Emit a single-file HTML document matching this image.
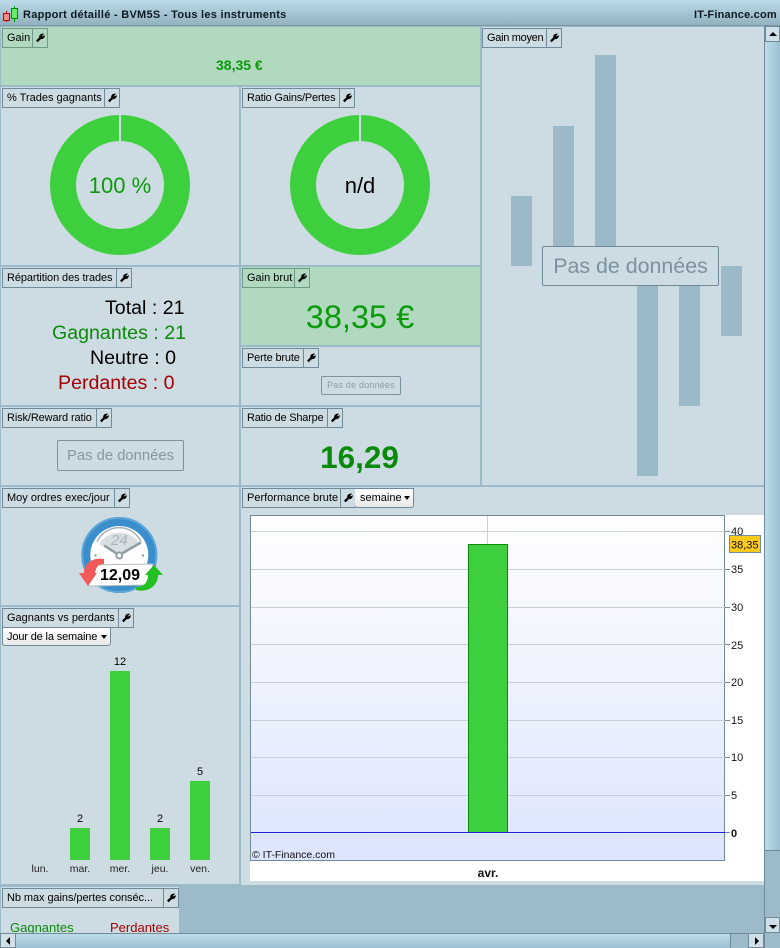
<!DOCTYPE html>
<html><head><meta charset="utf-8"><style>
html,body{margin:0;padding:0}
body{width:780px;height:948px;position:relative;overflow:hidden;background:#9cbac8;font-family:"Liberation Sans",sans-serif;color:#000}
.a,.p,.h,.t{position:absolute}
.p{background:#cddbe2}
.g{background:#b0d9c0}
.h{height:18px;border:1px solid #6f8a98;font-size:11px;line-height:19px;white-space:nowrap;box-sizing:content-box;padding-left:4px}
.h i{position:absolute;right:0;top:0;width:14px;height:18px;border-left:1px solid #6f8a98}
.h svg{position:absolute;left:2px;top:4px}
.t{white-space:nowrap;line-height:1}
.dd{position:absolute;height:17px;background:linear-gradient(#fff,#e8e8e8);border:1px solid #6f8a98;border-radius:0 0 3px 3px;font-size:11px;line-height:18px;padding-left:4px;box-sizing:content-box;white-space:nowrap}
.dd b{position:absolute;right:3px;top:7px;border:3.5px solid transparent;border-top:4px solid #000;border-bottom:0}
.bar{position:absolute;background:#3ecf3e}
.gb{position:absolute;background:#9cb9c7}
.sb{position:absolute;background:linear-gradient(90deg,#bcdcea,#9cc0d0)}
.sbh{position:absolute;background:linear-gradient(#bcdcea,#9cc0d0)}
.btn{position:absolute;background:#cfe0e8;border:1px solid #6f8a98;box-sizing:border-box}
</style></head><body>
<svg width="0" height="0" style="position:absolute"><defs><symbol id="w" viewBox="0 0 11 11"><path d="M2 9.300 L6.300 5" stroke="#000" stroke-width="2.600" fill="none"/><path d="M4.600 4.500 C4.400 1.800 7 .2 10 .8 L7.900 2.900 L8.500 3.900 L10.700 2.200 C11.200 5.200 8.300 7.600 6 6.400 Z" fill="#000"/></symbol></defs></svg>

<div class="a" style="left:0;top:0;width:780px;height:26px;background:linear-gradient(#bcdae8,#93b2c0);border-bottom:1px solid #7b97a3;box-sizing:border-box"></div>
<svg class="a" style="left:2px;top:5px" width="18" height="18"><path d="M4.500 6v11" stroke="#c00"/><rect x="1.500" y="8.500" width="6" height="7" fill="#f88" stroke="#b00"/><path d="M12.500 1v16" stroke="#090"/><rect x="9.500" y="3.500" width="6" height="10" fill="#6e6" stroke="#080"/></svg>
<div class="t" style="left:23px;top:10px;font-size:11px;font-weight:bold;color:#0c1a22;letter-spacing:.28px">Rapport détaillé - BVM5S - Tous les instruments</div>
<div class="t" style="left:694px;top:10px;font-size:11px;font-weight:bold;color:#0c1a22;letter-spacing:.2px">IT-Finance.com</div>

<!-- panels -->
<div class="p g" style="left:1px;top:27px;width:479px;height:58px"></div>
<div class="p" style="left:1px;top:87px;width:238px;height:178px"></div>
<div class="p" style="left:241px;top:87px;width:239px;height:178px"></div>
<div class="p" style="left:482px;top:27px;width:282px;height:458px"></div>
<div class="p" style="left:1px;top:267px;width:238px;height:138px"></div>
<div class="p g" style="left:241px;top:267px;width:239px;height:78px"></div>
<div class="p" style="left:241px;top:347px;width:239px;height:58px"></div>
<div class="p" style="left:1px;top:407px;width:238px;height:78px"></div>
<div class="p" style="left:241px;top:407px;width:239px;height:78px"></div>
<div class="p" style="left:1px;top:487px;width:238px;height:118px"></div>
<div class="p" style="left:1px;top:607px;width:238px;height:277px"></div>
<div class="p" style="left:241px;top:487px;width:523px;height:398px"></div>
<div class="p" style="left:1px;top:887px;width:178px;height:46px"></div>

<!-- headers -->
<div class="h" style="left:2px;top:28px;width:40px;border-color:#6f9a88">Gain<i style="border-color:#6f9a88"><svg width="10" height="10"><use href="#w"/></svg></i></div>
<div class="h" style="left:2px;top:88px;width:112px">% Trades gagnants<i><svg width="10" height="10"><use href="#w"/></svg></i></div>
<div class="h" style="left:242px;top:88px;width:107px;letter-spacing:-.22px">Ratio Gains/Pertes<i><svg width="10" height="10"><use href="#w"/></svg></i></div>
<div class="h" style="left:482px;top:28px;width:74px;letter-spacing:-.3px">Gain moyen<i><svg width="10" height="10"><use href="#w"/></svg></i></div>
<div class="h" style="left:2px;top:268px;width:124px;letter-spacing:-.1px">Répartition des trades<i><svg width="10" height="10"><use href="#w"/></svg></i></div>
<div class="h" style="left:242px;top:268px;width:62px;border-color:#6f9a88">Gain brut<i style="border-color:#6f9a88"><svg width="10" height="10"><use href="#w"/></svg></i></div>
<div class="h" style="left:242px;top:348px;width:71px;letter-spacing:-.15px">Perte brute<i><svg width="10" height="10"><use href="#w"/></svg></i></div>
<div class="h" style="left:2px;top:408px;width:104px;letter-spacing:-.12px">Risk/Reward ratio<i><svg width="10" height="10"><use href="#w"/></svg></i></div>
<div class="h" style="left:242px;top:408px;width:95px;letter-spacing:-.2px">Ratio de Sharpe<i><svg width="10" height="10"><use href="#w"/></svg></i></div>
<div class="h" style="left:2px;top:488px;width:122px">Moy ordres exec/jour<i><svg width="10" height="10"><use href="#w"/></svg></i></div>
<div class="h" style="left:2px;top:608px;width:126px">Gagnants vs perdants<i><svg width="10" height="10"><use href="#w"/></svg></i></div>
<div class="h" style="left:242px;top:488px;width:108px">Performance brute<i><svg width="10" height="10"><use href="#w"/></svg></i></div>
<div class="dd" style="left:355px;top:488px;width:53px;height:18px;line-height:19px;border-left:0;padding-left:5px">semaine<b></b></div>
<div class="dd" style="left:2px;top:627px;width:103px;letter-spacing:-.15px">Jour de la semaine<b></b></div>
<div class="h" style="left:2px;top:888px;width:171px;letter-spacing:-.07px">Nb max gains/pertes conséc...<i><svg width="10" height="10"><use href="#w"/></svg></i></div>

<!-- Gain -->
<div class="t" style="left:216px;top:58px;font-size:14px;font-weight:bold;color:#0a9a0a">38,35 €</div>

<!-- donuts -->
<svg class="a" style="left:50px;top:115px" width="140" height="140"><circle cx="70" cy="70" r="57" fill="none" stroke="#3ecf3e" stroke-width="26"/><rect x="69" y="0" width="2" height="26" fill="#cddbe2"/></svg>
<div class="t" style="left:40px;top:175px;width:160px;text-align:center;font-size:22px;color:#0a9a0a">100 %</div>
<svg class="a" style="left:290px;top:115px" width="140" height="140"><circle cx="70" cy="70" r="57" fill="none" stroke="#3ecf3e" stroke-width="26"/><rect x="69" y="0" width="2" height="26" fill="#cddbe2"/></svg>
<div class="t" style="left:280px;top:175px;width:160px;text-align:center;font-size:22px;color:#000">n/d</div>

<!-- Gain moyen bars -->
<div class="gb" style="left:511px;top:196px;width:21px;height:70px"></div>
<div class="gb" style="left:553px;top:126px;width:21px;height:125px"></div>
<div class="gb" style="left:595px;top:55px;width:21px;height:196px"></div>
<div class="gb" style="left:637px;top:280px;width:21px;height:196px"></div>
<div class="gb" style="left:679px;top:280px;width:21px;height:126px"></div>
<div class="gb" style="left:721px;top:266px;width:21px;height:70px"></div>
<div class="a" style="left:542px;top:246px;width:177px;height:40px;box-sizing:border-box;background:#cddbe2;border:1px solid #6f8a98;border-radius:2px;text-align:center;font-size:21.400px;line-height:39px;color:#7d929e">Pas de données</div>

<!-- repartition -->
<div class="t" style="left:105px;top:299px;font-size:19.600px;color:#000">Total : 21</div>
<div class="t" style="left:52px;top:324px;font-size:19.600px;color:#0a8a0a">Gagnantes : 21</div>
<div class="t" style="left:90px;top:349px;font-size:19.600px;color:#000">Neutre : 0</div>
<div class="t" style="left:58px;top:374px;font-size:19.600px;color:#a80000">Perdantes : 0</div>

<!-- gain brut -->
<div class="t" style="left:241px;top:301px;width:238px;text-align:center;font-size:32.500px;color:#0a9a0a">38,35 €</div>

<!-- perte brute -->
<div class="a" style="left:321px;top:376px;width:80px;height:19px;box-sizing:border-box;border:1px solid #7d929e;border-radius:2px;text-align:center;font-size:9px;line-height:17px;color:#8a9eaa;letter-spacing:.2px">Pas de données</div>

<!-- risk -->
<div class="a" style="left:57px;top:440px;width:127px;height:31px;box-sizing:border-box;border:1px solid #7d929e;border-radius:2px;text-align:center;font-size:14.800px;line-height:30px;color:#86989f">Pas de données</div>

<!-- sharpe -->
<div class="t" style="left:241px;top:442px;width:237px;text-align:center;font-size:31.500px;font-weight:bold;color:#0a8a0a">16,29</div>

<!-- clock -->
<svg class="a" style="left:78px;top:515px" width="86" height="82" viewBox="0 0 86 82">
<circle cx="41.300" cy="40" r="38" fill="#3a8ecb"/><circle cx="41.300" cy="40" r="37" fill="none" stroke="#5ba6d8" stroke-width="2"/>
<circle cx="41.300" cy="40" r="29" fill="#fff"/>
<path d="M21 29 A24 24 0 0 1 62 29 L41.300 41 Z" fill="#d8dfe3"/>
<path d="M19 27 A24 24 0 0 1 63 27" fill="none" stroke="#a3b2ba" stroke-width="1.500"/>
<path d="M38.500 38.500 L27 31 M44 38.500 L62 28" stroke="#8e9ea6" stroke-width="2.500" stroke-linecap="round"/>
<circle cx="41.300" cy="40.500" r="3" fill="#fff" stroke="#8e9ea6" stroke-width="2"/>
<circle cx="17.500" cy="40.500" r="1.200" fill="#8e9ea6"/><circle cx="65" cy="40.500" r="1.200" fill="#8e9ea6"/>
<path d="M13 50 L75 49 L71 70 L10 71 Z" fill="#fff" stroke="#b0bcc2"/>
<path d="M10 71 L1 58 L6 58 C6 48 15 42 26 44 L26 49 C20 49 18 52 17 58 L19 58 Z" fill="#f25a5a"/>
<path d="M76 50 L85 60 L80 60 C80 71 70 78 58 75 L58 72 C66 72 70 67 70 60 L67 60 Z" fill="#22c022"/>
</svg>
<div class="t" style="left:100px;top:568px;font-size:16px;font-weight:bold">12,09</div>
<div class="t" style="left:111px;top:533px;font-size:15px;font-style:italic;color:#a7b4ba">24</div>

<!-- gagnants vs perdants -->
<div class="bar" style="left:70px;top:828px;width:20px;height:32px"></div>
<div class="bar" style="left:110px;top:671px;width:20px;height:189px"></div>
<div class="bar" style="left:150px;top:828px;width:20px;height:32px"></div>
<div class="bar" style="left:190px;top:781px;width:20px;height:79px"></div>
<div class="t" style="left:70px;top:814px;width:20px;text-align:center;font-size:11px">2</div>
<div class="t" style="left:110px;top:657px;width:20px;text-align:center;font-size:11px">12</div>
<div class="t" style="left:150px;top:814px;width:20px;text-align:center;font-size:11px">2</div>
<div class="t" style="left:190px;top:767px;width:20px;text-align:center;font-size:11px">5</div>
<div class="t" style="left:20px;top:864px;width:40px;text-align:center;font-size:10.500px;color:#222">lun.</div>
<div class="t" style="left:60px;top:864px;width:40px;text-align:center;font-size:10.500px;color:#222">mar.</div>
<div class="t" style="left:100px;top:864px;width:40px;text-align:center;font-size:10.500px;color:#222">mer.</div>
<div class="t" style="left:140px;top:864px;width:40px;text-align:center;font-size:10.500px;color:#222">jeu.</div>
<div class="t" style="left:180px;top:864px;width:40px;text-align:center;font-size:10.500px;color:#222">ven.</div>

<!-- performance chart -->
<svg class="a" style="left:250px;top:515px" width="514" height="366" viewBox="0 0 514 366">
<defs><linearGradient id="bg" x1="0" y1="0" x2="0" y2="1"><stop offset="0" stop-color="#fff"/><stop offset="1" stop-color="#dce5fd"/></linearGradient></defs>
<rect width="514" height="366" fill="#fff"/>
<rect x="0.500" y="0.500" width="474" height="345" fill="url(#bg)" stroke="#6f8a98"/>
<g stroke="#c9d0d6" fill="none">
<path d="M1 16.500H475M1 54.500H475M1 92.500H475M1 129.500H475M1 167.500H475M1 205.500H475M1 242.500H475M1 280.500H475M237.500 1V30"/>
</g>
<g stroke="#6f8a98"><path d="M475 16.500H480M475 54.500H480M475 92.500H480M475 129.500H480M475 167.500H480M475 205.500H480M475 242.500H480M475 280.500H480M475 317.500H480"/></g>
<rect x="218.500" y="29.500" width="39" height="288" fill="#3ecf3e" stroke="#0a8a0a"/>
<path d="M1 317.500H475" stroke="#2222dd"/>
<g font-family="Liberation Sans" font-size="11" fill="#111">
<text x="481" y="20">40</text><text x="481" y="58">35</text><text x="481" y="96">30</text><text x="481" y="134">25</text><text x="481" y="171">20</text><text x="481" y="209">15</text><text x="481" y="246">10</text><text x="481" y="284">5</text><text x="481" y="322" font-weight="bold">0</text>
<text x="2" y="343" font-size="10.500">© IT-Finance.com</text>
<text x="238" y="362" text-anchor="middle" font-weight="bold" font-size="12">avr.</text>
</g>
<rect x="479.500" y="20.500" width="31" height="17" fill="#fdc91a" stroke="#6f8a98"/>
<text x="481" y="33.500" font-family="Liberation Sans" font-size="11" fill="#111">38,35</text>
</svg>

<!-- nb max -->
<div class="t" style="left:10px;top:921px;font-size:13px;color:#0a8a0a">Gagnantes</div>
<div class="t" style="left:110px;top:921px;font-size:13px;color:#a80000">Perdantes</div>

<!-- scrollbars -->
<div class="a" style="left:764px;top:26px;width:16px;height:922px;background:#9cbac8;border-left:1px solid #6f8a98;box-sizing:border-box"></div>
<div class="sb" style="left:765px;top:42px;width:15px;height:808px;border-bottom:1px solid #6f8a98"></div>
<div class="btn" style="left:765px;top:26px;width:15px;height:16px"></div>
<div class="a" style="left:769px;top:32px;border:4px solid transparent;border-bottom-color:#000;border-top:0"></div>
<div class="btn" style="left:765px;top:917px;width:15px;height:16px"></div>
<div class="a" style="left:769px;top:925px;border:4px solid transparent;border-top-color:#000;border-bottom:0"></div>
<div class="a" style="left:0;top:933px;width:764px;height:15px;background:#9cbac8;border-top:1px solid #6f8a98;box-sizing:border-box"></div>
<div class="sbh" style="left:16px;top:934px;width:714px;height:14px;border-right:1px solid #6f8a98"></div>
<div class="btn" style="left:0;top:933px;width:16px;height:15px"></div>
<div class="a" style="left:6px;top:937px;border:4px solid transparent;border-right-color:#000;border-left:0"></div>
<div class="btn" style="left:748px;top:933px;width:16px;height:15px"></div>
<div class="a" style="left:755px;top:937px;border:4px solid transparent;border-left-color:#000;border-right:0"></div>
</body></html>
